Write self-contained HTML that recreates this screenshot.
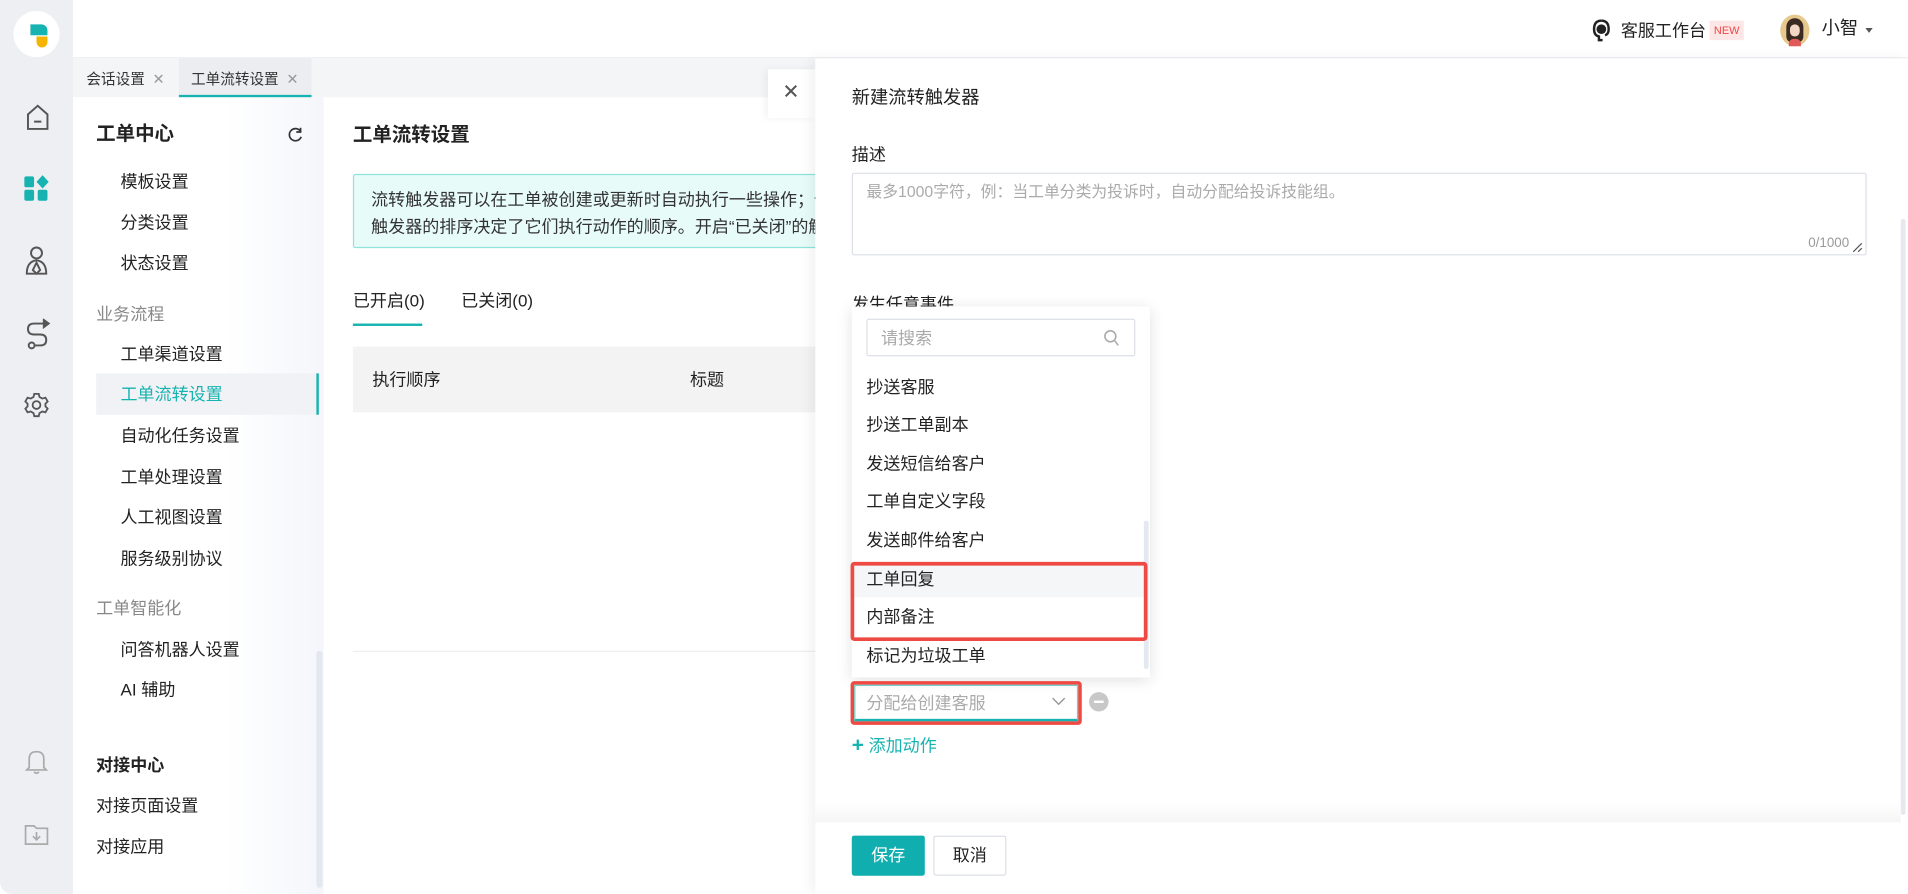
<!DOCTYPE html>
<html><head><meta charset="utf-8"><style>
*{box-sizing:border-box;margin:0;padding:0}
html,body{width:1908px;height:894px;overflow:hidden;background:#fff}
#s{position:absolute;left:0;top:0;width:1568px;height:735px;transform:scale(1.21684,1.2163);transform-origin:0 0;font-family:"Liberation Sans","Noto Sans CJK SC",sans-serif;font-size:14px;color:#222;background:#fff}
.a{position:absolute;white-space:nowrap}
.t{position:absolute;white-space:nowrap;line-height:20px}
</style></head><body><div id="s">
<div class="a" style="left:0;top:0;width:60px;height:735px;background:#eeeff2;border-radius:0 0 0 10px"></div>
<div class="a" style="left:11px;top:9px;width:38px;height:38px;border-radius:50%;background:#fff"></div>
<div class="a" style="left:25px;top:20px;width:14px;height:9px;background:#17b3b0;border-radius:0 5px 0 0"></div>
<div class="a" style="left:30px;top:30px;width:9px;height:9px;background:#f5b400;border-radius:0 0 5px 5px"></div>
<svg class="a" style="left:20px;top:85px" width="22" height="24" viewBox="0 0 22 24" fill="none" stroke="#555" stroke-width="1.6"><path d="M3 9 L11 2 L19 9 V21 H3 Z"/><path d="M8 15 H14"/></svg>
<svg class="a" style="left:19px;top:144px" width="22" height="22" viewBox="0 0 22 22" fill="#17b3b0"><rect x="1" y="1" width="8" height="9" rx="1.5"/><rect x="1" y="12" width="8" height="9" rx="1.5"/><rect x="12" y="12" width="8" height="9" rx="1.5"/><path d="M16 0 L21 5.5 L16 11 L11 5.5Z"/></svg>
<svg class="a" style="left:20px;top:202px" width="20" height="26" viewBox="0 0 20 26" fill="none" stroke="#555" stroke-width="1.6"><circle cx="10" cy="6" r="4.5"/><path d="M2 23 Q2 13 10 12 Q18 13 18 23 Z"/><path d="M10 14 L7 20 L10 23 L13 20Z"/></svg>
<svg class="a" style="left:20px;top:262px" width="22" height="26" viewBox="0 0 22 26" fill="none" stroke="#555" stroke-width="1.6"><path d="M17 4 H8 Q3 4 3 8.5 Q3 13 8 13 H13 Q18 13 18 17.5 Q18 22 13 22 H9"/><circle cx="6" cy="22" r="2.4"/><path d="M16 1 L20 4 L16 7Z" fill="#555"/></svg>
<svg class="a" style="left:19px;top:321px" width="22" height="24" viewBox="0 0 24 24" fill="none" stroke="#555" stroke-width="1.6"><circle cx="12" cy="12" r="3.5"/><path d="M10 2h4l.7 2.8 2.5 1.4 2.8-.8 2 3.4-2 2v2.4l2 2-2 3.4-2.8-.8-2.5 1.4L14 22h-4l-.7-2.8-2.5-1.4-2.8.8-2-3.4 2-2V10.8l-2-2 2-3.4 2.8.8 2.5-1.4z"/></svg>
<svg class="a" style="left:20px;top:615px" width="20" height="22" viewBox="0 0 20 22" fill="none" stroke="#aaa" stroke-width="1.4"><path d="M4 16 V9 Q4 3 10 3 Q16 3 16 9 V16 L18 18 H2Z"/><path d="M8 19.5 Q10 22 12 19.5"/></svg>
<svg class="a" style="left:20px;top:676px" width="20" height="20" viewBox="0 0 20 20" fill="none" stroke="#aaa" stroke-width="1.4"><path d="M1 3 H8 L10 5 H19 V18 H1Z"/><path d="M10 8 V14 M7 11.5 L10 14.5 L13 11.5"/></svg>
<div class="a" style="left:60px;top:47px;width:1508px;height:1px;background:#eceef1"></div>
<svg class="a" style="left:1308px;top:16px" width="16" height="20" viewBox="0 0 16 20"><path d="M8 1 Q2 1 2 8 Q2 13 6 14 L6 17 H9" fill="none" stroke="#222" stroke-width="2"/><path d="M8 1 Q14 1 14 8 Q14 12 11 13" fill="none" stroke="#222" stroke-width="2"/><circle cx="8" cy="8" r="4" fill="#222"/></svg>
<div class="t" style="left:1332px;top:15px;font-size:14px">客服工作台</div>
<div class="a" style="left:1405px;top:17px;width:28px;height:16px;background:#fde6e6;color:#f04848;font-size:9px;line-height:16px;text-align:center">NEW</div>
<div class="a" style="left:1463px;top:12px;width:24px;height:26px;border-radius:50%;background:#e8c98d"></div>
<div class="a" style="left:1468px;top:15px;width:14px;height:20px;border-radius:7px 7px 5px 5px;background:#3a2a22"></div>
<div class="a" style="left:1471px;top:20px;width:8px;height:10px;border-radius:4px;background:#f4d6c6"></div>
<div class="a" style="left:1470px;top:32px;width:10px;height:6px;border-radius:4px 4px 0 0;background:#e05a5a"></div>
<div class="t" style="left:1497px;top:14px;font-size:15px">小智</div>
<div class="a" style="left:1533px;top:23px;border:3.5px solid transparent;border-top:4px solid #555"></div>
<div class="a" style="left:60px;top:48px;width:610px;height:32px;background:#f4f5f7"></div>
<div class="t" style="left:71px;top:55px;font-size:12px;color:#333">会话设置 <span style="color:#999;margin-left:3px">✕</span></div>
<div class="a" style="left:147px;top:48px;width:109px;height:32px;background:#ebedf0;border-bottom:2px solid #17b3b0"></div>
<div class="t" style="left:157px;top:55px;font-size:12px;color:#333">工单流转设置 <span style="color:#999;margin-left:3px">✕</span></div>
<div class="a" style="left:60px;top:80px;width:206px;height:655px;background:linear-gradient(90deg,#fff 60%,#f4f6fb)"></div>
<div class="t" style="left:79px;top:101px;font-size:16px;font-weight:bold">工单中心</div>
<svg class="a" style="left:236px;top:104px" width="13" height="13" viewBox="0 0 13 13" fill="none" stroke="#333" stroke-width="1.4"><path d="M11 4 A5 5 0 1 0 11.5 8.5"/><path d="M11 1 V4.5 H7.5" /></svg>
<div class="a" style="left:79px;top:307px;width:183px;height:34px;background:#f0f2f5;border-right:2px solid #17b3b0"></div>
<div class="t" style="left:99px;top:139px">模板设置</div>
<div class="t" style="left:99px;top:173px">分类设置</div>
<div class="t" style="left:99px;top:206px">状态设置</div>
<div class="t" style="left:79px;top:248px;color:#888">业务流程</div>
<div class="t" style="left:99px;top:281px">工单渠道设置</div>
<div class="t" style="left:99px;top:314px;color:#17b3b0">工单流转设置</div>
<div class="t" style="left:99px;top:348px">自动化任务设置</div>
<div class="t" style="left:99px;top:382px">工单处理设置</div>
<div class="t" style="left:99px;top:415px">人工视图设置</div>
<div class="t" style="left:99px;top:449px">服务级别协议</div>
<div class="t" style="left:79px;top:490px;color:#888">工单智能化</div>
<div class="t" style="left:99px;top:524px">问答机器人设置</div>
<div class="t" style="left:99px;top:557px">AI 辅助</div>
<div class="t" style="left:79px;top:619px;font-weight:bold">对接中心</div>
<div class="t" style="left:79px;top:652px">对接页面设置</div>
<div class="t" style="left:79px;top:686px">对接应用</div>
<div class="a" style="left:260px;top:535px;width:5px;height:195px;border-radius:3px;background:#e3e7ef"></div>
<div class="t" style="left:290px;top:102px;font-size:16px;font-weight:bold">工单流转设置</div>
<div class="a" style="left:290px;top:143px;width:400px;height:61px;background:#e7fbf9;border:1px solid #8fe3db;border-radius:2px"></div>
<div class="t" style="left:305px;top:154px;color:#333">流转触发器可以在工单被创建或更新时自动执行一些操作；你</div>
<div class="t" style="left:305px;top:176px;color:#333">触发器的排序决定了它们执行动作的顺序。开启“已关闭”的触</div>
<div class="t" style="left:290px;top:237px">已开启(0)</div>
<div class="a" style="left:290px;top:266px;width:57px;height:2px;background:#17b3b0"></div>
<div class="t" style="left:379px;top:237px">已关闭(0)</div>
<div class="a" style="left:290px;top:285px;width:400px;height:54px;background:#f3f3f3"></div>
<div class="t" style="left:306px;top:302px">执行顺序</div>
<div class="t" style="left:567px;top:302px">标题</div>
<div class="a" style="left:290px;top:535px;width:400px;height:1px;background:#eee"></div>
<div class="a" style="left:631px;top:57px;width:40px;height:40px;background:#fff;box-shadow:-2px 0 6px rgba(0,0,0,.06)"></div>
<div class="t" style="left:643px;top:66px;font-size:17px;color:#555">✕</div>
<div class="a" style="left:670px;top:48px;width:898px;height:687px;background:#fff;box-shadow:-4px 0 10px rgba(0,0,0,.06)"></div>
<div class="t" style="left:700px;top:71px;font-size:15px">新建流转触发器</div>
<div class="t" style="left:700px;top:117px">描述</div>
<div class="a" style="left:700px;top:142px;width:834px;height:68px;border:1px solid #dcdfe6;border-radius:2px"></div>
<div class="t" style="left:712px;top:148px;font-size:13px;color:#aaa">最多1000字符，例：当工单分类为投诉时，自动分配给投诉技能组。</div>
<div class="t" style="left:1486px;top:190px;font-size:11px;color:#999">0/1000</div>
<svg class="a" style="left:1522px;top:199px" width="9" height="9" viewBox="0 0 9 9" stroke="#555" stroke-width="1"><path d="M8 1 L1 8 M8 5 L5 8"/></svg>
<div class="t" style="left:700px;top:240px">发生任意事件</div>
<div class="a" style="left:1562px;top:180px;width:4px;height:490px;border-radius:2px;background:#e6e8ee"></div>
<div class="a" style="left:700px;top:252px;width:245px;height:305px;background:#fff;box-shadow:0 2px 12px rgba(0,0,0,.12)"></div>
<div class="a" style="left:712px;top:262px;width:221px;height:31px;border:1px solid #dcdfe6;border-radius:2px"></div>
<div class="t" style="left:724px;top:268px;color:#aaa">请搜索</div>
<svg class="a" style="left:907px;top:271px" width="13" height="14" viewBox="0 0 13 14" fill="none" stroke="#aaa" stroke-width="1.3"><circle cx="5.5" cy="5.5" r="4.5"/><path d="M9 9 L12 13"/></svg>
<div class="a" style="left:701px;top:462px;width:240px;height:29px;background:#f5f6f8"></div>
<div class="t" style="left:712px;top:308px">抄送客服</div>
<div class="t" style="left:712px;top:339px">抄送工单副本</div>
<div class="t" style="left:712px;top:371px">发送短信给客户</div>
<div class="t" style="left:712px;top:402px">工单自定义字段</div>
<div class="t" style="left:712px;top:434px">发送邮件给客户</div>
<div class="t" style="left:712px;top:466px">工单回复</div>
<div class="t" style="left:712px;top:497px">内部备注</div>
<div class="t" style="left:712px;top:529px">标记为垃圾工单</div>
<div class="a" style="left:940px;top:428px;width:4px;height:122px;border-radius:2px;background:#e4e8f0"></div>
<div class="a" style="left:699px;top:462px;width:244px;height:65px;border:3px solid #ee4a43;border-radius:3px"></div>
<div class="a" style="left:699px;top:560px;width:190px;height:36px;border:3px solid #ee4a43;border-radius:3px"></div>
<div class="a" style="left:702px;top:563px;width:184px;height:30px;border:1px solid #6fcfca;border-bottom:2px solid #17b3b0"></div>
<div class="t" style="left:712px;top:568px;color:#aaa">分配给创建客服</div>
<svg class="a" style="left:864px;top:573px" width="12" height="8" viewBox="0 0 12 8" fill="none" stroke="#999" stroke-width="1.2"><path d="M1 1 L6 6 L11 1"/></svg>
<div class="a" style="left:895px;top:569px;width:16px;height:16px;border-radius:50%;background:#c8c8c8"></div>
<div class="a" style="left:899px;top:576px;width:8px;height:2px;background:#fff"></div>
<div class="t" style="left:700px;top:603px;color:#17b3b0"><b style="font-size:17px">+</b> 添加动作</div>
<div class="a" style="left:670px;top:660px;width:892px;height:16px;background:linear-gradient(#fff,#f5f5f5)"></div>
<div class="a" style="left:700px;top:687px;width:60px;height:33px;background:#10aeae;border-radius:2px;color:#fff;text-align:center;line-height:33px">保存</div>
<div class="a" style="left:767px;top:687px;width:60px;height:33px;background:#fff;border:1px solid #dcdfe6;border-radius:2px;text-align:center;line-height:31px">取消</div>
</div></body></html>
